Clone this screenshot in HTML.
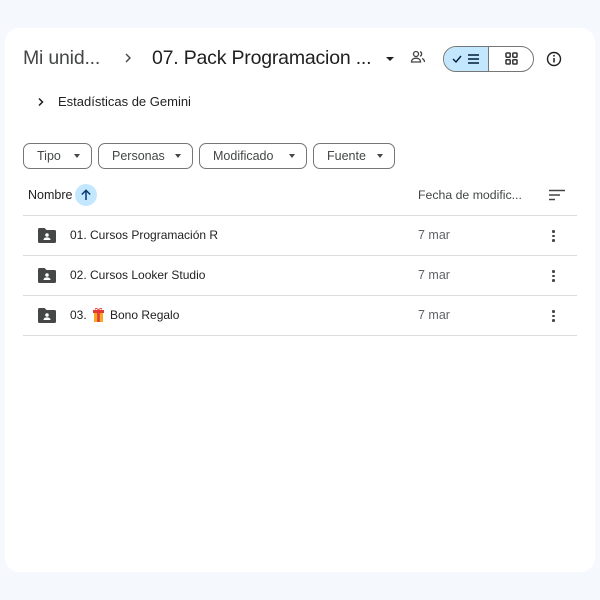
<!DOCTYPE html>
<html><head><meta charset="utf-8"><style>
*{box-sizing:border-box;margin:0;padding:0}
body{width:600px;height:600px;background:#f5f8fc;font-family:"Liberation Sans",sans-serif;color:#1f1f1f;position:relative;overflow:hidden}
.card{position:absolute;left:5px;top:28px;width:590px;height:544px;background:#fff;border-radius:14px}
.a{position:absolute;white-space:nowrap}
.chip{position:absolute;top:143px;height:26px;border:1px solid #747775;border-radius:7px;font-size:12.5px;color:#444746;line-height:24px;padding-left:13px}
.chip:after{content:"";position:absolute;right:11px;top:10px;border-left:3.5px solid transparent;border-right:3.5px solid transparent;border-top:4px solid #444746}
.line{position:absolute;left:23px;width:554px;height:1px;background:#dadce0}
.row{font-size:12px;color:#1f1f1f}
.date{font-size:12.5px;color:#5f6368}
.dots{position:absolute;left:552px;width:3px}
.dots i{display:block;width:2.5px;height:2.5px;background:#444;border-radius:50%;margin-bottom:2px}
</style></head><body>
<div class="card"></div>
<div class="a" style="left:23px;top:47px;font-size:19.5px;letter-spacing:-0.2px;color:#444746">Mi unid...</div>
<svg class="a" style="left:122px;top:52px" width="12" height="12" viewBox="0 0 12 12"><path d="M4 2l4 4-4 4" fill="none" stroke="#444746" stroke-width="1.4"/></svg>
<div class="a" style="left:152px;top:47px;font-size:19.5px;letter-spacing:-0.2px;color:#1f1f1f">07. Pack Programacion ...</div>
<div class="a" style="left:386px;top:57px;border-left:4px solid transparent;border-right:4px solid transparent;border-top:4.5px solid #1f1f1f"></div>
<svg class="a" style="left:410px;top:50px" width="16" height="14" viewBox="0 0 16 14"><circle cx="6" cy="4" r="2.5" fill="none" stroke="#444" stroke-width="1.3"/><path d="M1.5 12c0-2.5 2-3.8 4.5-3.8s4.5 1.3 4.5 3.8z" fill="none" stroke="#444" stroke-width="1.3"/><path d="M10 1.8a2.3 2.3 0 010 4.4M12 8.5c1.5.6 2.5 1.8 2.5 3.5" fill="none" stroke="#444" stroke-width="1.3"/></svg>
<div class="a" style="left:443px;top:46px;width:91px;height:26px;border:1px solid #747775;border-radius:13px;overflow:hidden">
<div style="position:absolute;left:0;top:0;width:45px;height:24px;background:#c2e7ff;border-right:1px solid #747775"></div>
<svg style="position:absolute;left:8px;top:6px" width="32" height="12" viewBox="0 0 32 12"><path d="M1 6l3 3 5-6" fill="none" stroke="#001d35" stroke-width="1.4"/><path d="M16 2h11M16 6h11M16 10h11" stroke="#001d35" stroke-width="1.6"/></svg>
<svg style="position:absolute;left:61px;top:5px" width="13" height="13" viewBox="0 0 13 13"><g fill="none" stroke="#333" stroke-width="1.5"><rect x="1" y="1" width="4.2" height="4.2" rx=".8"/><rect x="7.8" y="1" width="4.2" height="4.2" rx=".8"/><rect x="1" y="7.8" width="4.2" height="4.2" rx=".8"/><rect x="7.8" y="7.8" width="4.2" height="4.2" rx=".8"/></g></svg>
</div>
<svg class="a" style="left:546px;top:51px" width="16" height="16" viewBox="0 0 16 16"><circle cx="8" cy="8" r="6.5" fill="none" stroke="#1f1f1f" stroke-width="1.4"/><path d="M8 7v4.5" stroke="#1f1f1f" stroke-width="1.5"/><circle cx="8" cy="4.8" r=".9" fill="#1f1f1f"/></svg>
<svg class="a" style="left:36px;top:97px" width="10" height="10" viewBox="0 0 10 10"><path d="M3 1.5l3.5 3.5L3 8.5" fill="none" stroke="#1f1f1f" stroke-width="1.5"/></svg>
<div class="a" style="left:58px;top:94px;font-size:13px">Estadísticas de Gemini</div>
<div class="chip" style="left:23px;width:69px">Tipo</div>
<div class="chip" style="left:98px;width:95px">Personas</div>
<div class="chip" style="left:199px;width:108px">Modificado</div>
<div class="chip" style="left:313px;width:82px">Fuente</div>
<div class="a" style="left:28px;top:188px;font-size:12.5px">Nombre</div>
<div class="a" style="left:75px;top:184px;width:22px;height:22px;border-radius:50%;background:#c2e7ff"></div>
<svg class="a" style="left:80px;top:189px" width="12" height="12" viewBox="0 0 12 12"><path d="M6 11V1.5M1.8 5.5L6 1.3l4.2 4.2" fill="none" stroke="#0b3b6e" stroke-width="1.5"/></svg>
<div class="a" style="left:418px;top:188px;font-size:12.3px;color:#444746">Fecha de modific...</div>
<svg class="a" style="left:549px;top:189px" width="16" height="12" viewBox="0 0 16 12"><path d="M0 1.5h16M0 6h11M0 10.5h6" stroke="#444" stroke-width="1.5"/></svg>
<div class="line" style="top:215px"></div>
<div class="line" style="top:255px"></div>
<div class="line" style="top:295px"></div>
<div class="line" style="top:335px"></div>
<svg class="a" style="left:38px;top:228px" width="18" height="15" viewBox="0 0 18 15"><path d="M0 1.5a1.5 1.5 0 011.5-1.5h5l2 2h8a1.5 1.5 0 011.5 1.5v10a1.5 1.5 0 01-1.5 1.5h-15a1.5 1.5 0 01-1.5-1.5z" fill="#444746"/><circle cx="9" cy="7" r="1.8" fill="#fff"/><path d="M5.5 12c0-1.8 1.6-2.6 3.5-2.6s3.5.8 3.5 2.6z" fill="#fff"/></svg>
<svg class="a" style="left:38px;top:268px" width="18" height="15" viewBox="0 0 18 15"><path d="M0 1.5a1.5 1.5 0 011.5-1.5h5l2 2h8a1.5 1.5 0 011.5 1.5v10a1.5 1.5 0 01-1.5 1.5h-15a1.5 1.5 0 01-1.5-1.5z" fill="#444746"/><circle cx="9" cy="7" r="1.8" fill="#fff"/><path d="M5.5 12c0-1.8 1.6-2.6 3.5-2.6s3.5.8 3.5 2.6z" fill="#fff"/></svg>
<svg class="a" style="left:38px;top:308px" width="18" height="15" viewBox="0 0 18 15"><path d="M0 1.5a1.5 1.5 0 011.5-1.5h5l2 2h8a1.5 1.5 0 011.5 1.5v10a1.5 1.5 0 01-1.5 1.5h-15a1.5 1.5 0 01-1.5-1.5z" fill="#444746"/><circle cx="9" cy="7" r="1.8" fill="#fff"/><path d="M5.5 12c0-1.8 1.6-2.6 3.5-2.6s3.5.8 3.5 2.6z" fill="#fff"/></svg>
<div class="a row" style="left:70px;top:228px">01. Cursos Programación R</div>
<div class="a row" style="left:70px;top:268px">02. Cursos Looker Studio</div>
<div class="a row" style="left:70px;top:308px">03.</div>
<svg class="a" style="left:93px;top:308px" width="11" height="14" viewBox="0 0 11 14"><rect x="0" y="2" width="11" height="3" fill="#e53935"/><rect x="1" y="5" width="9" height="9" fill="#f9a825"/><rect x="4.2" y="2" width="2.6" height="12" fill="#e53935"/><path d="M5.5 2C4 0 2 0 2.5 1.5M5.5 2C7 0 9 0 8.5 1.5" fill="none" stroke="#e53935" stroke-width="1"/></svg>
<div class="a row" style="left:110px;top:308px">Bono Regalo</div>
<div class="a date" style="left:418px;top:228px">7 mar</div>
<div class="a date" style="left:418px;top:268px">7 mar</div>
<div class="a date" style="left:418px;top:308px">7 mar</div>
<div class="dots" style="top:230px"><i></i><i></i><i></i></div>
<div class="dots" style="top:270px"><i></i><i></i><i></i></div>
<div class="dots" style="top:310px"><i></i><i></i><i></i></div>
</body></html>
